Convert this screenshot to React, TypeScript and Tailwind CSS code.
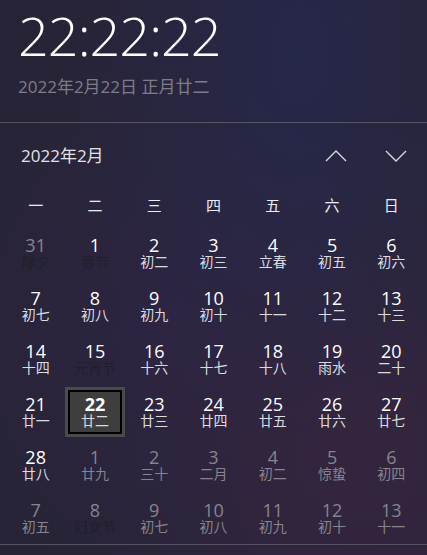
type Day = { n: number; sub: string; out?: boolean; fest?: boolean; sel?: boolean };

const weekdays = ['一', '二', '三', '四', '五', '六', '日'];

const days: Day[] = [
  { n: 31, sub: '除夕', out: true, fest: true },
  { n: 1, sub: '春节', fest: true },
  { n: 2, sub: '初二' },
  { n: 3, sub: '初三' },
  { n: 4, sub: '立春' },
  { n: 5, sub: '初五' },
  { n: 6, sub: '初六' },
  { n: 7, sub: '初七' },
  { n: 8, sub: '初八' },
  { n: 9, sub: '初九' },
  { n: 10, sub: '初十' },
  { n: 11, sub: '十一' },
  { n: 12, sub: '十二' },
  { n: 13, sub: '十三' },
  { n: 14, sub: '十四' },
  { n: 15, sub: '元宵节', fest: true },
  { n: 16, sub: '十六' },
  { n: 17, sub: '十七' },
  { n: 18, sub: '十八' },
  { n: 19, sub: '雨水' },
  { n: 20, sub: '二十' },
  { n: 21, sub: '廿一' },
  { n: 22, sub: '廿二', sel: true },
  { n: 23, sub: '廿三' },
  { n: 24, sub: '廿四' },
  { n: 25, sub: '廿五' },
  { n: 26, sub: '廿六' },
  { n: 27, sub: '廿七' },
  { n: 28, sub: '廿八' },
  { n: 1, sub: '廿九', out: true },
  { n: 2, sub: '三十', out: true },
  { n: 3, sub: '二月', out: true },
  { n: 4, sub: '初二', out: true },
  { n: 5, sub: '惊蛰', out: true },
  { n: 6, sub: '初四', out: true },
  { n: 7, sub: '初五', out: true },
  { n: 8, sub: '妇女节', out: true, fest: true },
  { n: 9, sub: '初七', out: true },
  { n: 10, sub: '初八', out: true },
  { n: 11, sub: '初九', out: true },
  { n: 12, sub: '初十', out: true },
  { n: 13, sub: '十一', out: true },
];

function DayCell({ d }: { d: Day }) {
  const num = d.out ? 'text-[#86848f]' : 'text-white';
  const sub = d.fest ? 'text-[#221f2c]' : d.out ? 'text-[#86848f]' : 'text-[#dcdce0]';
  const inner = (
    <div className="flex flex-col items-center">
      <span className={`text-[18px] leading-[18px] ${d.sel ? 'font-bold' : ''} ${num}`}>{d.n}</span>
      <span className={`text-[14px] leading-[16px] ${sub}`}>{d.sub}</span>
    </div>
  );
  if (d.sel) {
    return (
      <div className="h-[50px] border-[3px] border-[#4b4b4b]">
        <div className="flex h-full items-center justify-center border-2 border-black bg-[#3e3e3e]">{inner}</div>
      </div>
    );
  }
  return <div className="flex h-[50px] items-center justify-center">{inner}</div>;
}

// 细箭头
function Chevron({ up }: { up?: boolean }) {
  return (
    <svg width="22" height="14" viewBox="0 0 22 14" fill="none" stroke="#d8d8dc" strokeWidth="1.4">
      {up ? <polyline points="1,12 11,2 21,12" /> : <polyline points="1,2 11,12 21,2" />}
    </svg>
  );
}

export default function App() {
  return (
    <div
      className="h-[555px] w-[427px] overflow-hidden bg-[#282437] bg-[radial-gradient(ellipse_at_70%_10%,#26284a_0%,transparent_55%),radial-gradient(ellipse_at_85%_80%,#35253f_0%,transparent_50%),radial-gradient(ellipse_at_40%_60%,#2d2442_0%,transparent_60%)] text-white"
      style={{ fontFamily: '"Open Sans", "Noto Sans CJK SC", sans-serif' }}
    >
      {/* 时间 */}
      <div className="px-[18px] pt-[3px]">
        <div className="text-[54px] font-light leading-[64px] tracking-[-1px] text-white">22:22:22</div>
        <div className="mt-[7px] text-[17px] text-[#7e7c88]">2022年2月22日 正月廿二</div>
      </div>

      <div className="mt-[22px] h-px bg-[#55535f]" />

      {/* 月份 */}
      <div className="flex h-[66px] items-center pl-[21px] pr-[20px]">
        <span className="flex-1 text-[17px] text-[#e2e2e6]">2022年2月</span>
        <div className="mr-[38px]">
          <Chevron up />
        </div>
        <Chevron />
      </div>

      {/* 星期 */}
      <div className="grid grid-cols-7 px-[6px]">
        {weekdays.map((w) => (
          <div key={w} className="flex h-[34px] items-center justify-center text-[15px] text-[#ececf0]">
            {w}
          </div>
        ))}
      </div>

      <div className="mt-[5px] grid grid-cols-7 gap-y-[3px] px-[6px]">
        {days.map((d, i) => (
          <DayCell key={i} d={d} />
        ))}
      </div>

      <div className="mt-[1px] h-px bg-[#55535f]" />
    </div>
  );
}
